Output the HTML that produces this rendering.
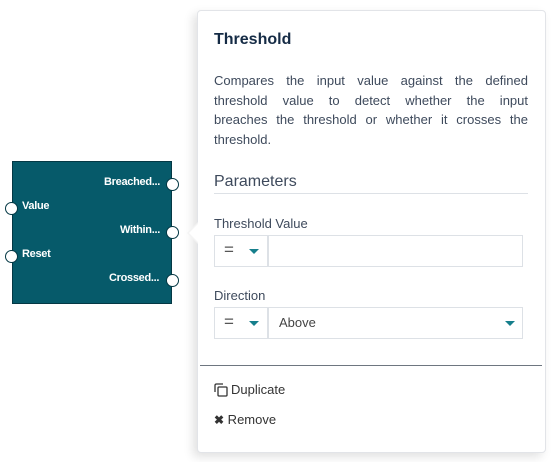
<!DOCTYPE html>
<html><head><meta charset="utf-8"><style>
*{box-sizing:border-box;margin:0;padding:0}
body{width:555px;height:462px;background:#fff;position:relative;overflow:hidden;font-family:"Liberation Sans",sans-serif;color:#333}
.node{position:absolute;left:12px;top:161px;width:160px;height:143px;background:#065a6a;border:1px solid #043844}
.lbl{position:absolute;color:#fff;font-size:11px;font-weight:bold;letter-spacing:-0.3px}
.port{position:absolute;width:13px;height:13px;border-radius:50%;background:#fff;border:1.5px solid #043844}
.panel{position:absolute;left:197px;top:10px;width:349px;height:443px;background:#fff;border:1px solid #e2e4e8;border-radius:4px;box-shadow:-4px 4px 10px rgba(0,0,0,0.12)}
.arrow{position:absolute;left:187px;top:222px;width:0;height:0;border-top:11px solid transparent;border-bottom:11px solid transparent;border-right:11px solid #f4f4f4}
.arrow2{position:absolute;left:189px;top:223px;width:0;height:0;border-top:10px solid transparent;border-bottom:10px solid transparent;border-right:10px solid #fff}
.t{position:absolute;left:214px}
h1{font-size:16px;color:#152b45;font-weight:bold}
.desc{font-size:13px;line-height:19.5px;color:#3e4a5c;width:314px}
.desc div{text-align:justify;text-align-last:justify;white-space:nowrap}
.desc div.l{text-align-last:left}
.sec{font-size:16px;color:#3e4a5c}
.fl{font-size:13px;color:#3e4a5c}
.box{position:absolute;border:1px solid #dde1e6;background:#fff}
.eq{font-size:17px;color:#555;position:absolute;left:9px;top:4px;font-weight:300}
.tri{position:absolute;width:0;height:0;border-left:5px solid transparent;border-right:5px solid transparent;border-top:5px solid #167f8c}
</style></head><body>
<div class="node">
<div class="lbl" style="left:91px;top:14px">Breached...</div>
<div class="lbl" style="left:9px;top:38px">Value</div>
<div class="lbl" style="left:107px;top:62px">Within...</div>
<div class="lbl" style="left:9px;top:86px">Reset</div>
<div class="lbl" style="left:96px;top:110px">Crossed...</div>
</div>
<div class="port" style="left:166px;top:178px"></div>
<div class="port" style="left:5px;top:202px"></div>
<div class="port" style="left:166px;top:226px"></div>
<div class="port" style="left:5px;top:250px"></div>
<div class="port" style="left:166px;top:274px"></div>
<div class="panel"></div>
<div class="arrow"></div><div class="arrow2"></div>
<h1 class="t" style="top:31px">Threshold</h1>
<div class="t desc" style="top:71px">
<div>Compares the input value against the defined</div>
<div>threshold value to detect whether the input</div>
<div>breaches the threshold or whether it crosses the</div>
<div class="l">threshold.</div>
</div>
<div class="t sec" style="top:173px">Parameters</div>
<div style="position:absolute;left:214px;top:193px;width:314px;height:1px;background:#dde1e6"></div>
<div class="t fl" style="top:216px">Threshold Value</div>
<div class="box" style="left:214px;top:235px;width:54px;height:32px"><span class="eq">=</span><div class="tri" style="left:34px;top:13px"></div></div>
<div class="box" style="left:268px;top:235px;width:255px;height:32px"></div>
<div class="t fl" style="top:288px">Direction</div>
<div class="box" style="left:214px;top:307px;width:54px;height:32px"><span class="eq">=</span><div class="tri" style="left:34px;top:13px"></div></div>
<div class="box" style="left:268px;top:307px;width:255px;height:32px"><span style="position:absolute;left:10px;top:7px;font-size:13px;color:#444">Above</span><div class="tri" style="left:236px;top:13px"></div></div>
<div style="position:absolute;left:200px;top:365px;width:342px;height:1px;background:#6e7680"></div>
<svg style="position:absolute;left:214px;top:383px" width="14" height="14" viewBox="0 0 14 14" fill="none" stroke="#333" stroke-width="1.3"><path d="M1 9V2.5Q1 1 2.5 1H9"/><rect x="4" y="4" width="9" height="9" rx="1"/></svg>
<div class="t" style="left:231px;top:382px;font-size:13px;color:#333">Duplicate</div>
<div class="t" style="top:412px;font-size:13px;color:#333"><b style="font-size:12px">✖</b> Remove</div>
</body></html>
